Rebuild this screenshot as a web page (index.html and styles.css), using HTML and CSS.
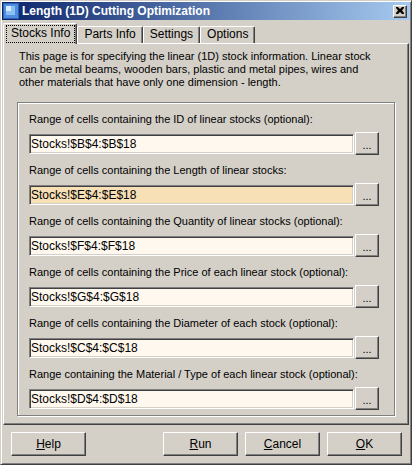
FILE: index.html
```html
<!DOCTYPE html>
<html lang="en">
<head>
<meta charset="UTF-8">
<title>Length (1D) Cutting Optimization</title>
<link rel="stylesheet" href="styles.css">
</head>
<body>
<div class="window">
    <div class="titlebar">
        <svg class="app-icon" width="16" height="16" viewBox="0 0 16 16">
            <rect x="0" y="0" width="16" height="16" fill="#2c5fb8"/>
            <rect x="1" y="1" width="14" height="14" fill="#4f8de0"/>
            <rect x="3" y="3" width="9" height="9" fill="#8cc0f4"/>
            <rect x="3" y="3" width="5" height="5" fill="#d6ecff"/>
        </svg>
        <span class="title">Length (1D) Cutting Optimization</span>
        <div class="close-btn">
            <svg width="8" height="7" viewBox="0 0 8 7">
                <path d="M0 0h2l2 2 2-2h2v1l-2 2.5 2 2.5v1h-2l-2-2-2 2h-2v-1l2-2.5-2-2.5z" fill="#000"/>
            </svg>
        </div>
    </div>

    <div class="tabs">
        <div class="tab active"><span class="focus">Stocks Info</span></div>
        <div class="tab">Parts Info</div>
        <div class="tab">Settings</div>
        <div class="tab">Options</div>
    </div>

    <div class="panel">
        <p class="intro">This page is for specifying the linear (1D) stock information. Linear stock can be metal beams, wooden bars, plastic and metal pipes, wires and other materials that have only one dimension - length.</p>

        <div class="group">
            <div class="field">
                <label>Range of cells containing the ID of linear stocks (optional):</label>
                <div class="field-row">
                    <input type="text" class="range" value="Stocks!$B$4:$B$18">
                    <button class="pick">...</button>
                </div>
            </div>
            <div class="field">
                <label>Range of cells containing the Length of linear stocks:</label>
                <div class="field-row">
                    <input type="text" class="range required" value="Stocks!$E$4:$E$18">
                    <button class="pick">...</button>
                </div>
            </div>
            <div class="field">
                <label>Range of cells containing the Quantity of linear stocks (optional):</label>
                <div class="field-row">
                    <input type="text" class="range" value="Stocks!$F$4:$F$18">
                    <button class="pick">...</button>
                </div>
            </div>
            <div class="field">
                <label>Range of cells containing the Price of each linear stock (optional):</label>
                <div class="field-row">
                    <input type="text" class="range" value="Stocks!$G$4:$G$18">
                    <button class="pick">...</button>
                </div>
            </div>
            <div class="field">
                <label>Range of cells containing the Diameter of each stock (optional):</label>
                <div class="field-row">
                    <input type="text" class="range" value="Stocks!$C$4:$C$18">
                    <button class="pick">...</button>
                </div>
            </div>
            <div class="field">
                <label>Range containing the Material / Type of each linear stock (optional):</label>
                <div class="field-row">
                    <input type="text" class="range" value="Stocks!$D$4:$D$18">
                    <button class="pick">...</button>
                </div>
            </div>
        </div>
    </div>

    <div class="footer">
        <button class="btn"><u>H</u>elp</button>
        <div class="spacer"></div>
        <button class="btn"><u>R</u>un</button>
        <button class="btn"><u>C</u>ancel</button>
        <button class="btn"><u>O</u>K</button>
    </div>
</div>
</body>
</html>
```

FILE: styles.css
```css
body{
    margin:0;
    background:#d4d0c8;
    font-family:"Liberation Sans", Arial, sans-serif;
    font-size:11px;
    color:#000;
}

.window{
    width:412px;
    height:465px;
    box-sizing:border-box;
    padding:1px;
    background:#d4d0c8;
    border:1px solid;
    border-color:#d4d0c8 #404040 #404040 #d4d0c8;
    box-shadow:inset 1px 1px 0 #fff, inset -1px -1px 0 #808080;
    display:flex;
    flex-direction:column;
}

/* title bar */
.titlebar{
    height:18px;
    flex:none;
    display:flex;
    align-items:center;
    padding:0 3px 0 1px;
    background:linear-gradient(to right, #0a246a, #a6caf0);
}
.app-icon{
    flex:none;
    margin-right:3px;
}
.title{
    color:#fff;
    font-weight:bold;
    font-size:12px;
    flex:1;
}
.close-btn{
    width:14px;
    height:13px;
    box-sizing:border-box;
    background:#d4d0c8;
    border:1px solid;
    border-color:#fff #404040 #404040 #fff;
    box-shadow:inset -1px -1px 0 #808080;
    display:flex;
    align-items:center;
    justify-content:center;
    padding:0 1px 1px 0;
}

/* tabs */
.tabs{
    height:23px;
    flex:none;
    display:flex;
    align-items:flex-end;
    padding-left:1px;
    position:relative;
    z-index:1;
}
.tab{
    height:17px;
    box-sizing:border-box;
    padding:0 6px 0 6px;
    line-height:15px;
    font-size:12px;
    border:1px solid;
    border-bottom:none;
    border-color:#fff #404040 #fff #fff;
    box-shadow:inset -1px 0 0 #808080;
    border-radius:2px 2px 0 0;
}
.tab.active{
    height:21px;
    margin-bottom:-1px;
    padding:2px 2px 0 3px;
    background:#d4d0c8;
}
.focus{
    display:block;
    outline:1px dotted #000;
    padding:0 4px;
    height:16px;
    line-height:15px;
}

/* main page */
.panel{
    flex:1;
    margin:0 1px 0 1px;
    padding:6px 13px 5px 13px;
    border:1px solid;
    border-color:#fff #404040 #404040 #fff;
    box-shadow:inset -1px -1px 0 #808080;
}
.intro{
    width:356px;
    margin:0 0 13px 2px;
    line-height:13px;
}

.group{
    border:1px solid #808080;
    box-shadow:1px 1px 0 #fff, inset 1px 1px 0 #fff;
    padding:9px 15px 5px 11px;
}
.field{
    margin-bottom:8px;
}
.field:last-child{
    margin-bottom:0;
}
.field label{
    display:block;
    height:14px;
    line-height:14px;
    margin-bottom:6px;
}
.field-row{
    display:flex;
    height:23px;
}
.range{
    flex:1;
    min-width:0;
    height:20px;
    margin:2px 1px 0 0;
    box-sizing:border-box;
    padding:0 1px;
    font-family:"Liberation Sans", Arial, sans-serif;
    font-size:12px;
    color:#000;
    background:#fff8ee;
    border:1px solid;
    border-color:#808080 #fff #fff #808080;
    box-shadow:inset 1px 1px 0 #404040, inset -1px -1px 0 #d4d0c8;
    outline:none;
}
.range.required{
    background:#f7dfb6;
}

.pick, .btn{
    font-family:"Liberation Sans", Arial, sans-serif;
    font-size:11px;
    color:#000;
    background:#d4d0c8;
    border:1px solid;
    border-color:#fff #404040 #404040 #fff;
    box-shadow:inset -1px -1px 0 #808080;
    padding:0;
    box-sizing:border-box;
}
.pick{
    width:24px;
    height:23px;
    flex:none;
    padding-top:3px;
}

/* bottom buttons */
.footer{
    height:38px;
    flex:none;
    box-sizing:border-box;
    padding:7px 8px 7px 9px;
    display:flex;
    gap:7px;
}
.spacer{
    flex:1;
}
.btn{
    width:75px;
    height:24px;
    font-size:12px;
}
```
